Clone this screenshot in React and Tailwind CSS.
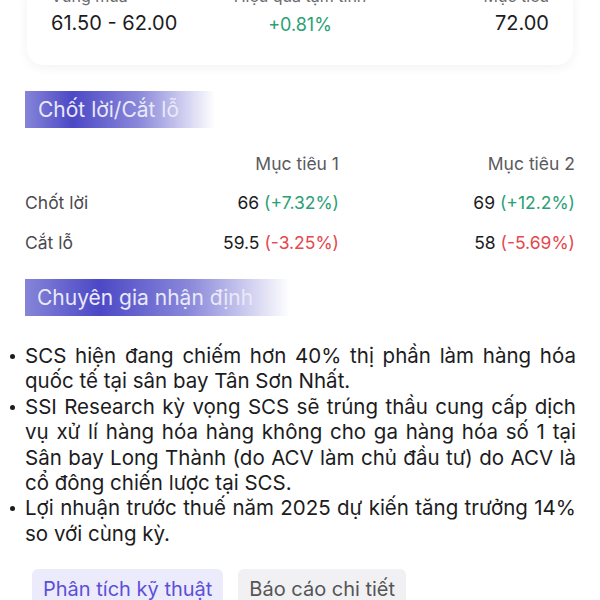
export default function App() {
  const bullets = [
    "SCS hiện đang chiếm hơn 40% thị phần làm hàng hóa quốc tế tại sân bay Tân Sơn Nhất.",
    "SSI Research kỳ vọng SCS sẽ trúng thầu cung cấp dịch vụ xử lí hàng hóa hàng không cho ga hàng hóa số 1 tại Sân bay Long Thành (do ACV làm chủ đầu tư) do ACV là cổ đông chiến lược tại SCS.",
    "Lợi nhuận trước thuế năm 2025 dự kiến  tăng trưởng 14% so với cùng kỳ.",
  ]

  return (
    <div className="w-[600px] h-[600px] overflow-hidden bg-white font-['Inter','Noto_Sans',sans-serif] text-[#1c1c1e]">
      {/* summary card */}
      <div className="mx-[27px] -mt-[14px] rounded-2xl bg-white shadow-[0_2px_12px_rgba(0,0,0,0.06)] px-6 pt-0 pb-[29px]">
        <div className="grid grid-cols-3 text-[16px] text-[#6b6b70] leading-[20px]">
          <span>Vùng mua</span>
          <span className="text-center">Hiệu quả tạm tính</span>
          <span className="text-right">Mục tiêu</span>
        </div>
        <div className="grid grid-cols-3 items-end mt-[4px]">
          <span className="text-[20px] leading-[26px]">61.50 - 62.00</span>
          <span className="text-center text-[18px] leading-[22px] text-[#2aa174]">+0.81%</span>
          <span className="text-right text-[20px] leading-[26px]">72.00</span>
        </div>
      </div>

      {/* take profit / stop loss */}
      <div className="mt-[26px] ml-[25px] w-[190px] h-[37px] flex items-center pl-[13px] bg-[linear-gradient(90deg,#8685d8_0%,#4c48c6_25%,#8a88da_60%,#ffffff_100%)]">
        <span className="text-[21px] text-[#e9e9f8]">Chốt lời/Cắt lỗ</span>
      </div>

      <div className="px-[25px] mt-[25px] text-[17.5px] leading-[22px]">
        <div className="grid grid-cols-[1fr_150px_236px] text-[#5a5a60]">
          <span></span>
          <span className="text-right">Mục tiêu 1</span>
          <span className="text-right">Mục tiêu 2</span>
        </div>
        <div className="grid grid-cols-[1fr_150px_236px] mt-[17px]">
          <span className="text-[#4a4a4f]">Chốt lời</span>
          <span className="text-right">
            66 <span className="text-[#2aa174]">(+7.32%)</span>
          </span>
          <span className="text-right">
            69 <span className="text-[#2aa174]">(+12.2%)</span>
          </span>
        </div>
        <div className="grid grid-cols-[1fr_150px_236px] mt-[18px]">
          <span className="text-[#4a4a4f]">Cắt lỗ</span>
          <span className="text-right">
            59.5 <span className="text-[#e5484d]">(-3.25%)</span>
          </span>
          <span className="text-right">
            58 <span className="text-[#e5484d]">(-5.69%)</span>
          </span>
        </div>
      </div>

      {/* expert view */}
      <div className="mt-[25px] ml-[25px] w-[265px] h-[37px] flex items-center pl-[12px] bg-[linear-gradient(90deg,#8685d8_0%,#4c48c6_28%,#8a88da_62%,#ffffff_100%)]">
        <span className="text-[21px] text-[#e9e9f8]">Chuyên gia nhận định</span>
      </div>

      <ul className="mt-[27px] pl-[25px] pr-[24px] text-[20.5px] leading-[25.4px] text-justify">
        {bullets.map((b, i) => (
          <li key={i} className="relative">
            <span className="absolute -left-[15px] top-[11px] w-[5px] h-[5px] rounded-full bg-[#1c1c1e]"></span>
            {b}
          </li>
        ))}
      </ul>

      <div className="flex gap-[15px] ml-[32px] mt-[23px]">
        <div className="rounded-md bg-[#ecebfb] text-[#5b50d8] text-[20px] px-[11px] pt-[5px] pb-[8px]">
          Phân tích kỹ thuật
        </div>
        <div className="rounded-md bg-[#f1f1f3] text-[#555558] text-[20px] px-[11px] pt-[5px] pb-[8px]">
          Báo cáo chi tiết
        </div>
      </div>
    </div>
  )
}
